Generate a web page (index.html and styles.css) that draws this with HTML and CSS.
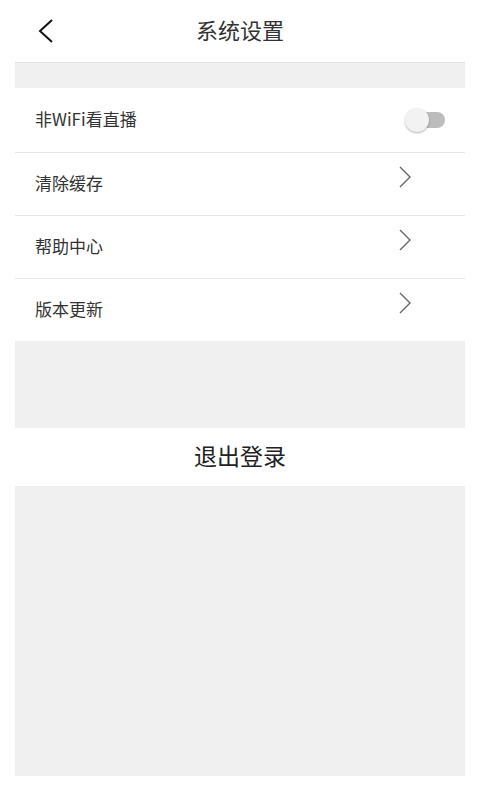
FILE: index.html
```html
<!DOCTYPE html>
<html>
<head>
    <meta charset="utf-8">
    <title>系统设置</title>
    <link rel="stylesheet" href="styles.css">
</head>
<body>
    <div class="page">
        <header class="topbar">
            <a class="back" href="#">
                <svg width="16" height="26" viewBox="0 0 16 26"><path d="M14 2 L2 13 L14 24" fill="none" stroke="#111" stroke-width="2"/></svg>
            </a>
            <h1>系统设置</h1>
            <span></span>
        </header>

        <ul class="settings">
            <li class="row">
                <span class="label">非WiFi看直播</span>
                <span class="switch"><span class="knob"></span></span>
            </li>
            <li class="row">
                <span class="label">清除缓存</span>
                <svg class="arrow" width="14" height="22" viewBox="0 0 14 22"><path d="M2 1 L12 11 L2 21" fill="none" stroke="#666" stroke-width="1.4"/></svg>
            </li>
            <li class="row">
                <span class="label">帮助中心</span>
                <svg class="arrow" width="14" height="22" viewBox="0 0 14 22"><path d="M2 1 L12 11 L2 21" fill="none" stroke="#666" stroke-width="1.4"/></svg>
            </li>
            <li class="row">
                <span class="label">版本更新</span>
                <svg class="arrow" width="14" height="22" viewBox="0 0 14 22"><path d="M2 1 L12 11 L2 21" fill="none" stroke="#666" stroke-width="1.4"/></svg>
            </li>
        </ul>

        <div class="logout">退出登录</div>
    </div>
</body>
</html>
```

FILE: styles.css
```css
body { margin: 0; background: #fff; font-family: "Noto Sans CJK SC", "Noto Sans", sans-serif; color: #333; }
.page { margin: 0 15px; background: #f0f0f0; min-height: 776px; }

.topbar { display: grid; grid-template-columns: 60px 1fr 60px; align-items: center; height: 62px; background: #fff; border-bottom: 1px solid #e2e2e2; }
.back { display: flex; margin-left: 23px; }
.topbar h1 { margin: 0 0 4px; text-align: center; font-size: 22px; font-weight: normal; color: #333; }

.settings { list-style: none; margin: 25px 0 0; padding: 0; background: #fff; }
.row { display: flex; align-items: center; justify-content: space-between; height: 63px; padding: 0 20px; font-size: 17px; box-sizing: border-box; }
.row:first-child { height: 64px; }
.row + .row { border-top: 1px solid #e6e6e6; }
.row .label { margin-bottom: 4px; }
.row .arrow { margin-right: 33px; margin-bottom: 14px; }

.switch { position: relative; width: 35px; height: 16px; border-radius: 8px; background: #bcbcbc; }
.knob { position: absolute; left: -5px; top: -4px; width: 24px; height: 24px; border-radius: 50%; background: #f2f2f2; box-shadow: 0 1px 2px rgba(0,0,0,0.3); }

.logout { margin-top: 87px; height: 58px; line-height: 54px; padding-bottom: 4px; box-sizing: border-box; background: #fff; text-align: center; font-size: 23px; color: #222; }
```
